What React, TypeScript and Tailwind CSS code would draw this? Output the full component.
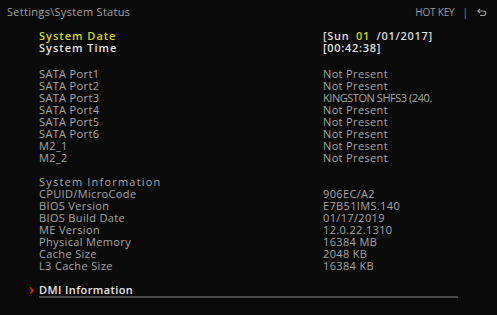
const ports = [
  ["SATA Port1", "Not Present"],
  ["SATA Port2", "Not Present"],
  ["SATA Port3", "KINGSTON SHFS3 (240."],
  ["SATA Port4", "Not Present"],
  ["SATA Port5", "Not Present"],
  ["SATA Port6", "Not Present"],
  ["M2_1", "Not Present"],
  ["M2_2", "Not Present"],
];

const sysInfo = [
  ["CPUID/MicroCode", "906EC/A2"],
  ["BIOS Version", "E7B51IMS.140"],
  ["BIOS Build Date", "01/17/2019"],
  ["ME Version", "12.0.22.1310"],
  ["Physical Memory", "16384 MB"],
  ["Cache Size", "2048 KB"],
  ["L3 Cache Size", "16384 KB"],
];

function Row({ label, value }: { label: string; value: string }) {
  return (
    <div className="flex h-[12px] items-center tracking-[0.35px]">
      <div className="w-[284px] shrink-0">{label}</div>
      <div className={value.startsWith("KING") ? "tracking-[-0.45px]" : ""}>{value}</div>
    </div>
  );
}

export default function App() {
  return (
    <div
      className="w-[497px] h-[315px] bg-[#0a0a0a] text-[#a6a6a6] text-[11px] leading-[12px] overflow-hidden"
      style={{ fontFamily: '"Open Sans", "Noto Sans", sans-serif' }}
    >
      {/* header */}
      <div className="flex items-center h-[24px] pl-[7px] pr-[10px]">
        <div className="text-[#a0a0a0] tracking-[0.3px]">Settings\System Status</div>
        <div className="ml-auto flex items-center text-[10px] text-[#9a9a9a]">
          <span className="tracking-[-0.2px]">HOT KEY</span>
          <span className="ml-[8px] text-[#8a8a8a]">|</span>
          <svg className="ml-[9px]" width="10" height="8" viewBox="0 0 10 8" fill="none" stroke="#9a9a9a" strokeWidth="1.2">
            <path d="M3 1 L1 3 L3 5" />
            <path d="M1 3 H6.5 A2.3 2.3 0 0 1 6.5 7.6 H3" />
          </svg>
        </div>
      </div>

      <div className="pl-[39px] pt-[6px]">
        {/* date / time */}
        <div className="flex h-[12px] items-center font-semibold tracking-[1px]">
          <div className="w-[284px] shrink-0 text-[#d6d600]">System Date</div>
          <div className="text-[#dcdcdc] tracking-[0.7px]">
            [Sun <span className="text-[#d6d600] mx-[3px]">01</span> /01/2017]
          </div>
        </div>
        <div className="flex h-[12px] items-center font-semibold tracking-[1px] text-[#e2e2e2]">
          <div className="w-[284px] shrink-0">System Time</div>
          <div className="tracking-[0.7px]">[00:42:38]</div>
        </div>

        {/* ports */}
        <div className="mt-[14px]">
          {ports.map(([l, v]) => (
            <Row key={l} label={l} value={v} />
          ))}
        </div>

        {/* system info */}
        <div className="mt-[11px] h-[13px] flex items-center tracking-[1.2px] text-[#a8a8a8]">System Information</div>
        <div>
          {sysInfo.map(([l, v]) => (
            <Row key={l} label={l} value={v} />
          ))}
        </div>

        {/* DMI */}
        <div className="relative mt-[12px] mr-[39px]">
          <span className="absolute left-[-10px] top-0 h-[12px] flex items-center">
            <svg width="5" height="7" viewBox="0 0 5 7" fill="none" stroke="#e02424" strokeWidth="1.6">
              <path d="M1 0.5 L4 3.5 L1 6.5" />
            </svg>
          </span>
          <div className="h-[12px] flex items-center text-[#e6e6e6] font-semibold tracking-[0.4px]">DMI Information</div>
          <div className="h-[2px] bg-[#4a4a4a]" />
        </div>
      </div>
    </div>
  );
}
